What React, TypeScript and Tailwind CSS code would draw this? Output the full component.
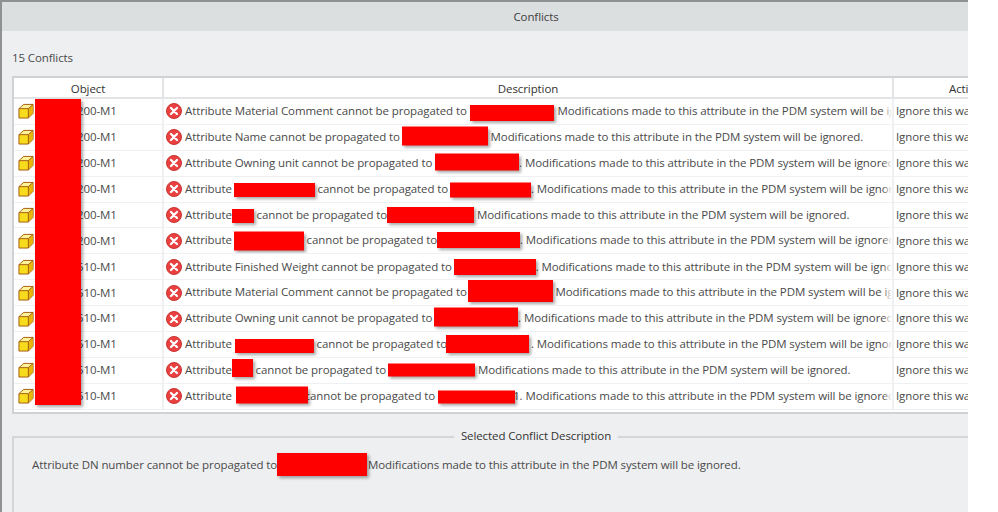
const OBJECT_ROWS = ["200", "200", "200", "200", "200", "200", "510", "510", "510", "510", "510", "510"];

type Segment = string | { w: number; h: number; y: number; x?: number; r?: number };

const MSG = " Modifications made to this attribute in the PDM system will be ignored.";
const DOT_MSG = "." + MSG;

const ROWS: Segment[][] = [
  ["Attribute Material Comment cannot be propagated to ", { w: 84, h: 16, y: 1, r: 1 }, MSG],
  ["Attribute Name cannot be propagated to ", { w: 86, h: 19, y: -1.5, x: -1 }, MSG],
  ["Attribute Owning unit cannot be propagated to ", { w: 84, h: 17, y: -1.5 }, DOT_MSG],
  ["Attribute ", { w: 81, h: 14, y: 0, x: -1 }, " cannot be propagated to ", { w: 81, h: 15, y: -0.5, x: -1 }, DOT_MSG],
  ["Attribute ", { w: 22, h: 14, y: 0, x: -3 }, " cannot be propagated to ", { w: 87, h: 16, y: -1, x: -3 }, MSG],
  ["Attribute ", { w: 70, h: 19, y: -0.5, x: -1 }, " cannot be propagated to ", { w: 83, h: 16, y: -1, x: -3 }, DOT_MSG],
  ["Attribute Finished Weight cannot be propagated to ", { w: 82, h: 16, y: -1, x: -1 }, DOT_MSG],
  ["Attribute Material Comment cannot be propagated to ", { w: 85, h: 22, y: -2, x: -2 }, MSG],
  ["Attribute Owning unit cannot be propagated to ", { w: 84, h: 19, y: -1.5, x: -1 }, DOT_MSG],
  ["Attribute ", { w: 79, h: 14, y: 1 }, " cannot be propagated to ", { w: 83, h: 18, y: -1, x: -4, r: 2 }, DOT_MSG],
  ["Attribute ", { w: 21, h: 18, y: -3, x: -3 }, " cannot be propagated to ", { w: 87, h: 13, y: -0.5, x: -1 }, MSG],
  ["Attribute  ", { w: 72, h: 17, y: -1.5, x: -2, r: -3 }, "cannot be propagated to C", { w: 77, h: 13, y: 0.5, x: -7, r: -2 }, "1." + MSG],
];

function Redaction({ w, h, y = 0, x = 0, r = 0 }: { w: number; h: number; y?: number; x?: number; r?: number }) {
  return (
    <span
      className="inline-block bg-[#ff0000] align-middle shadow-[2px_2px_3px_rgba(0,0,0,0.35)]"
      style={{ width: w, height: h, marginLeft: x, marginRight: r, transform: `translateY(${y}px)` }}
    />
  );
}

function CubeIcon() {
  return (
    <svg width="16" height="16" viewBox="0 0 17 17" className="shrink-0">
      <path d="M1 6 L6 1.5 H16 V11 L11 16 H1 Z" fill="#f7dc1e" stroke="#a3560f" strokeWidth="1" strokeLinejoin="round" />
      <path d="M1.5 6 L6.2 2 H15.5 L11 6 Z" fill="#fdf29a" />
      <path d="M11 6.5 L15.5 2.5 V10.8 L11 15.5 Z" fill="#e8b70e" />
      <path d="M1 6 H11 V16 M11 6 L16 1.5" fill="none" stroke="#a3560f" strokeWidth="1" />
    </svg>
  );
}

function ErrorIcon() {
  return (
    <svg width="16" height="16" viewBox="0 0 17 17" className="shrink-0">
      <circle cx="8.5" cy="8.5" r="8" fill="#e8413f" stroke="#c9302f" strokeWidth="1" />
      <path d="M5.3 5.3 L11.7 11.7 M11.7 5.3 L5.3 11.7" stroke="#ffffff" strokeWidth="2.4" strokeLinecap="round" />
    </svg>
  );
}

export default function App() {
  return (
    <div className="relative h-[512px] w-[998px] overflow-hidden bg-white font-['Open_Sans','Noto_Sans',sans-serif] text-[11.5px] tracking-[-0.1px] text-[#4a4a4a]">
      <div className="flex h-full w-[968px] flex-col overflow-hidden border-l-2 border-t-2 border-[#8f9193] bg-[#eeeff1]">
        <div className="flex h-[29px] shrink-0 items-center justify-center bg-[#dcdfe0] pl-[102px] pt-[1px] text-[#404040]">Conflicts</div>

        <div className="pl-[10px] pt-[19px] leading-[16px]">15 Conflicts</div>

        <div className="ml-[10px] mt-[10px] h-[338px] shrink-0 overflow-hidden border-2 border-r-0 border-[#cfd1d3] bg-white">
          <div className="flex h-[21px] border-b-2 border-[#e3e4e6] font-medium leading-[21px] text-[#333333]">
            <div className="w-[150px] shrink-0 border-r-2 border-[#e3e4e6] text-center">Object</div>
            <div className="w-[730px] shrink-0 border-r-2 border-[#e3e4e6] text-center">Description</div>
            <div className="whitespace-nowrap pl-[55px]">Action</div>
          </div>

          {ROWS.map((row, i) => (
            <div key={i} className="flex h-[25.9px] items-center border-b border-[#eef0f2]">
              <div className="flex h-full w-[150px] shrink-0 items-center border-r-2 border-[#eef0f2] pl-[4px]">
                <CubeIcon />
                <span className="ml-[43px] pb-[1px]">{OBJECT_ROWS[i]}-M1</span>
              </div>
              <div className="relative flex h-full w-[730px] shrink-0 items-center overflow-hidden border-r-2 border-[#eef0f2] pl-[2px]">
                <ErrorIcon />
                <span className="ml-[3px] whitespace-nowrap">
                  {row.map((seg, j) =>
                    typeof seg === "string" ? (
                      <span key={j} className="whitespace-pre">{seg}</span>
                    ) : (
                      <Redaction key={j} w={seg.w} h={seg.h} y={seg.y} x={seg.x} r={seg.r} />
                    ),
                  )}
                </span>
                <div className="absolute bottom-0 right-0 top-0 w-[9px] bg-gradient-to-r from-transparent to-white" />
              </div>
              <div className="whitespace-nowrap pb-[1px] pl-[2px]">Ignore this warning</div>
            </div>
          ))}
        </div>

        <div className="relative ml-[10px] mt-[22px] flex-1 border-l-2 border-t-2 border-[#d5d6d8] pl-[18px] pt-[16px]">
          <div className="absolute -top-[10px] left-0 right-0 flex justify-center pl-[90px]">
            <span className="bg-[#eeeff1] px-[7px] font-medium leading-[16px] text-[#333333]">Selected Conflict Description</span>
          </div>
          <span className="whitespace-pre">Attribute DN number cannot be propagated to </span>
          <Redaction w={90} h={23} x={-3} r={1} y={-1} />
          <span className="whitespace-pre">{MSG.trim()}</span>
        </div>
      </div>

      <div className="absolute left-[35px] top-[99px] h-[306px] w-[46px] bg-[#ff0000] shadow-[2px_2px_3px_rgba(0,0,0,0.35)]" />
    </div>
  );
}
